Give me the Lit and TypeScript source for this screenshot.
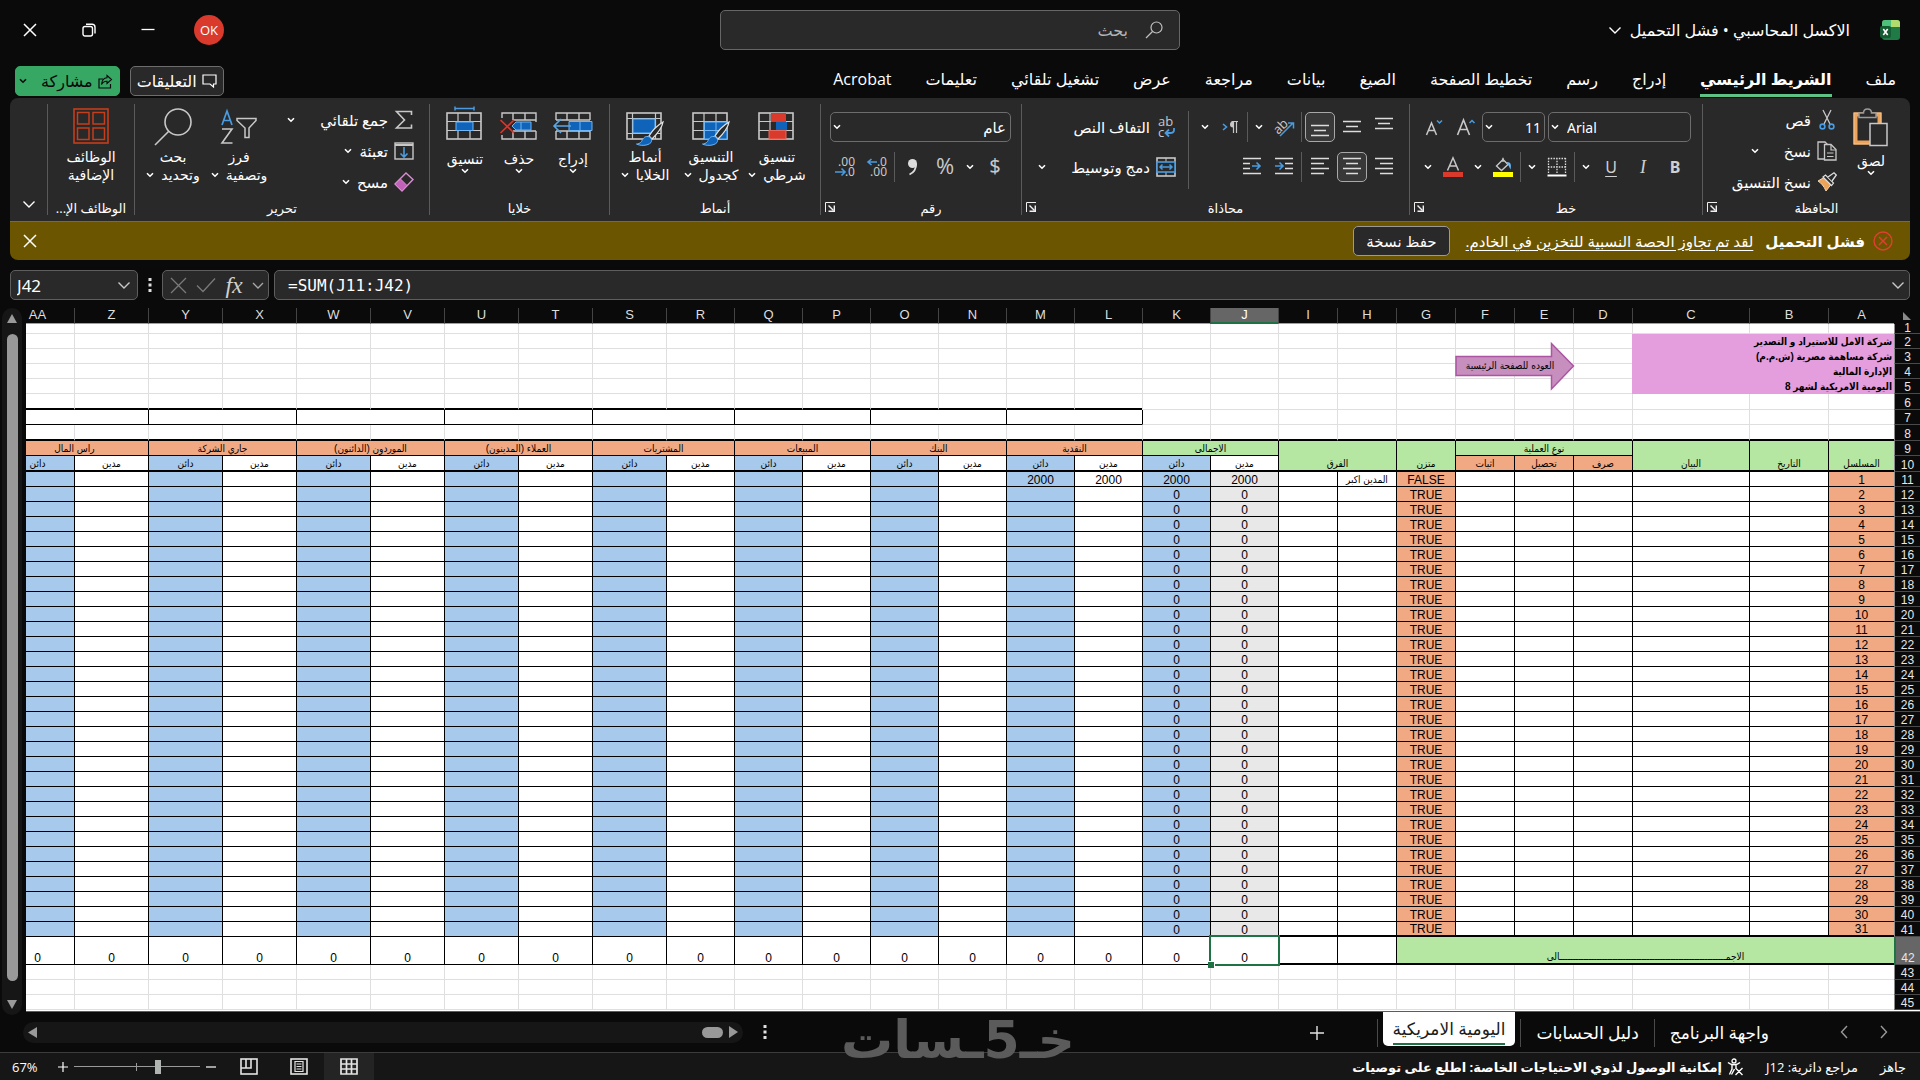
import { LitElement, html, svg, css, nothing, TemplateResult } from "lit";
import { customElement } from "lit/decorators.js";
import { classMap } from "lit/directives/class-map.js";
import { styleMap } from "lit/directives/style-map.js";

const icon = (w: number, h: number, body: unknown) => html`<svg
  width=${w} height=${h} viewBox="0 0 ${w} ${h}" fill="none" aria-hidden="true">${body}</svg>`;

const chevron = () => icon(8, 6, svg`<path d="M1 1.2 4 4.2 7 1.2" stroke="currentColor" stroke-width="1.6"/>`);
const wideChevron = (c = "currentColor") =>
  icon(14, 9, svg`<path d="M1.500 1.500 7 7 12.500 1.500" stroke=${c} stroke-width="1.4"/>`);
const cross = (c = "currentColor") =>
  icon(14, 14, svg`<path d="M1 1 13 13M13 1 1 13" stroke=${c} stroke-width="1.5"/>`);

const BLUE = "#4a9be0";
const FILL = "#0f63b8";
const EDGE = "#6fb6f2";
const GREY = "#c8c8c8";

const shared = css`
  * { box-sizing: border-box; }
  button, input, select {
    font: inherit;
    color: inherit;
    background: none;
    border: 0;
    padding: 0;
    margin: 0;
    border-radius: 0;
  }
  select { appearance: none; }
  svg { display: block; flex: none; direction: ltr; overflow: visible; }
`;

const launcher = () => html`<button class="launch" aria-label="المزيد من الخيارات">${icon(10, 10, svg`
  <path d="M.5 10V.5H10" stroke="#f0f0f0"/><path d="M3.500 3.500 8.500 8.500" stroke="#f0f0f0" stroke-width="1.400"/>
  <path d="M9.300 3.500V9.300H3.500" stroke="#f0f0f0" stroke-width="1.400"/>`)}</button>`;

const gridBase = svg`<rect x="1" y="1" width="34" height="26" stroke=${GREY} stroke-width="1.600"/>
  <path d="M12 1V27M24 1V27M1 9.500H35M1 18.500H35" stroke=${GREY} stroke-width="1.200"/>`;
const brush = svg`<path d="M37 10C32 13 26 19 23 24L26 27C31 22 36 16 37 10Z" fill="#292929" stroke="#e4e4e4" stroke-width="1.300"/>
  <path d="M22 24.500C18 24 17 27 15.500 29.500 14 31.500 12 32 10.500 32 14 34 22 34 25 30.500 26.500 28 25 25 22 24.500Z" fill=${FILL} stroke=${EDGE}/>`;

const lines = (rows: [number, number, number][], extra: unknown = nothing) =>
  icon(20, 20, svg`${rows.map(([x1, x2, y]) => svg`<path d="M${x1} ${y}.500H${x2}" stroke="#dcdcdc" stroke-width="1.500"/>`)}${extra}`);

const I = {
  paste: icon(36, 38, svg`<rect x="2.500" y="6.500" width="24" height="28" stroke="#eda35a" stroke-width="4"/>
    <rect x="1" y="5" width="27" height="31" stroke="#f6c58f" stroke-width="1"/>
    <rect x="5" y="9" width="19" height="23" fill="#292929"/>
    <path d="M6 9.500V5H10.500C10.500 -.5 18.500 -.5 18.500 5H23V9.500Z" fill="#292929" stroke="#9a9a9a" stroke-width="1.500"/>
    <rect x="17" y="15.500" width="17" height="22" fill="#292929" stroke=${GREY} stroke-width="1.500"/>`),
  cut: icon(20, 20, svg`<path d="M6 0 13 14M14 0 7 14" stroke=${GREY} stroke-width="1.300"/>
    <circle cx="5.500" cy="16.500" r="2.400" stroke=${BLUE} stroke-width="1.600"/><circle cx="14.500" cy="16.500" r="2.400" stroke=${BLUE} stroke-width="1.600"/>`),
  copy: icon(20, 20, svg`<path d="M7 18H1V1H8L11 4" stroke=${GREY} stroke-width="1.300"/>
    <path d="M7.500 3.500H14L19 8.500V19H7.500Z" fill="#292929" stroke=${GREY} stroke-width="1.300"/>
    <path d="M14 4V9H19M10 12H16.500M10 15.500H16.500" stroke=${GREY} stroke-width="1.200"/>`),
  painter: icon(20, 20, svg`<path d="M1 9 7 5.500 14 12.500 9 19C7 14 4 11 1 9Z" fill="#eda35a" stroke="#f6d5ae"/>
    <path d="M6 5 8.500 3 16.500 11 14.500 13.500Z" fill="#292929" stroke="#dedede" stroke-width="1.200"/>
    <path d="M11 5 17 .8 19.300 3 15 9" fill="#292929" stroke="#dedede" stroke-width="1.300"/>`),
  growA: icon(20, 20, svg`<path d="M1.500 18 7.500 3 13.500 18M3.800 12.500H11.300" stroke=${GREY} stroke-width="1.600"/>
    <path d="M13.500 6 16 3.500 18.500 6" stroke=${BLUE} stroke-width="1.500"/>`),
  shrinkA: icon(20, 20, svg`<path d="M2.500 18 7.500 6 12.500 18M4.300 13.500H10.800" stroke=${GREY} stroke-width="1.500"/>
    <path d="M13 3.500 15.500 6 18 3.500" stroke=${BLUE} stroke-width="1.500"/>`),
  borders: icon(20, 20, svg`<path d="M1 1.500H19M1 10H19M1.500 1V17M10 1V17M18.500 1V17" stroke="#dcdcdc" stroke-width="1.300" stroke-dasharray="1.500 1.200"/>
    <path d="M.5 18.500H19.500" stroke="#fff" stroke-width="2"/>`),
  bucket: icon(20, 20, svg`<path d="M3.500 9 10 2.500 15 7.500 8.500 13.500Z" stroke=${GREY} stroke-width="1.400"/>
    <path d="M10 5V.8" stroke=${GREY} stroke-width="1.400"/><path d="M14 5C18 5 18.500 8 17.500 12.500 16 10 16 8 14 7Z" fill=${EDGE}/>
    <rect y="15" width="20" height="5" fill="#ffff00"/>`),
  fontColor: icon(20, 20, svg`<path d="M4.500 13.500 10 .8 15.500 13.500M6.500 9H13.500" stroke=${GREY} stroke-width="1.500"/>
    <rect y="15" width="20" height="5" fill="#d93a2c"/>`),
  top: lines([[1, 19, 1], [4, 16, 6], [1, 19, 11]]),
  middle: lines([[1, 19, 4], [4, 16, 9], [1, 19, 14]]),
  bottom: lines([[1, 19, 8], [4, 16, 13], [1, 19, 18]]),
  right: lines([[1, 19, 1], [6, 19, 6], [1, 19, 11], [6, 19, 16]]),
  center: lines([[1, 19, 1], [4, 16, 6], [1, 19, 11], [4, 16, 16]]),
  left: lines([[1, 19, 1], [1, 14, 6], [1, 19, 11], [1, 14, 16]]),
  outdent: lines([[1, 19, 1], [11, 19, 6], [11, 19, 11], [1, 19, 16]],
    svg`<path d="M1 9H9M5.500 5.500 9 9 5.500 12.500" stroke=${BLUE} stroke-width="1.600"/>`),
  indent: lines([[1, 19, 1], [1, 8, 6], [1, 8, 11], [1, 19, 16]],
    svg`<path d="M10 9H18M14.500 5.500 18 9 14.500 12.500" stroke=${BLUE} stroke-width="1.600"/>`),
  orient: icon(22, 22, svg`<text x="1" y="15" font-family="Open Sans" font-size="13" fill=${GREY} transform="rotate(-45 8 12)">ab</text>
    <path d="M7 20 20 7M15 7H20.500V12.500" stroke=${BLUE} stroke-width="1.500"/>`),
  rtl: icon(18, 14, svg`<path d="M2 4 5.500 7 2 10" stroke=${BLUE} stroke-width="1.600"/>
    <path d="M12.500 1.500V13M15.500 1.500V13M10.500 1.500H17" stroke=${GREY} stroke-width="1.200"/><path d="M12 1.500A3 3 0 0 0 12 7.500Z" fill=${GREY}/>`),
  wrap: icon(20, 22, svg`<text x="2" y="10" font-family="Open Sans" font-size="13" fill=${GREY}>ab</text>
    <text x="2" y="21" font-family="Open Sans" font-size="13" fill=${GREY}>c</text>
    <path d="M18 12V14Q18 17 14 17H10M13 13.500 9.500 17 13 20.500" stroke=${BLUE} stroke-width="1.800"/>`),
  merge: icon(20, 20, svg`<rect x="1" y="1" width="18" height="18" stroke=${GREY} stroke-width="1.600"/>
    <path d="M10 1V19" stroke=${GREY}/><rect x="1" y="5" width="18" height="10" fill="#292929" stroke=${BLUE} stroke-width="1.600"/>
    <path d="M4 10H16M6.500 7.500 4 10 6.500 12.500M13.500 7.500 16 10 13.500 12.500" stroke=${BLUE} stroke-width="1.500"/>`),
  inc: icon(20, 20, svg`<text x="20" y="9" font-family="Noto Sans" font-size="12" fill=${GREY} text-anchor="end">.0</text>
    <text x="20" y="19" font-family="Noto Sans" font-size="12" fill=${GREY} text-anchor="end">.00</text>
    <path d="M1 5H10M4.500 2 1 5 4.500 8" stroke=${BLUE} stroke-width="1.600"/>`),
  dec: icon(20, 20, svg`<text x="20" y="9" font-family="Noto Sans" font-size="12" fill=${GREY} text-anchor="end">.00</text>
    <text x="20" y="19" font-family="Noto Sans" font-size="12" fill=${GREY} text-anchor="end">.0</text>
    <path d="M0 15H10M6.500 11.500 10 15 6.500 18.500" stroke=${BLUE} stroke-width="1.600"/>`),
  comma: icon(12, 18, svg`<circle cx="5.500" cy="5.500" r="4.500" fill="#dcdcdc"/><path d="M9.200 5.500C9.200 11 7 14.500 2.500 16.500" stroke="#dcdcdc" stroke-width="1.800"/>`),
  cond: icon(38, 36, svg`<g transform="translate(0 4)">${gridBase}<rect x="13" y="1" width="15" height="9" fill="#d93a2c"/>
    <rect x="18" y="10" width="11" height="8" fill=${FILL}/><rect x="11" y="18.500" width="17" height="8.500" fill="#d93a2c" stroke="#e8675b"/></g>`),
  table: icon(38, 36, svg`<g transform="translate(0 4)">${gridBase}<path d="M12.500 10H35V27H12.500Z" fill=${FILL} stroke=${EDGE}/>
    <path d="M24 10V27M12 18.500H35" stroke=${EDGE}/>${brush}</g>`),
  styles: icon(38, 36, svg`<g transform="translate(0 4)"><rect x="1" y="1" width="34" height="26" stroke=${GREY} stroke-width="1.600"/>
    <path d="M6.500 1V27M29.500 1V27M1 6.500H35M1 21.500H35" stroke=${GREY} stroke-width="1.200"/>
    <rect x="7" y="7" width="22" height="14" fill=${FILL} stroke=${EDGE}/>${brush}</g>`),
  insert: icon(40, 36, svg`<g transform="translate(0 4)"><path d="M3 8V1H37V8M14 1V8M26 1V8M3 19V27H37V19M14 19V27M26 19V27M3 8H37M3 19H37" stroke=${GREY} stroke-width="1.400"/>
    <path d="M16 9.500H39V18.500H16ZM27 9.500V18.500" fill=${FILL} stroke=${EDGE}/>
    <path d="M1 14H18M8 7 1 14 8 21" stroke="#5aa7e6" stroke-width="1.600"/></g>`),
  remove: icon(40, 36, svg`<g transform="translate(0 4)"><path d="M3 6V1H37V10M14 1V8M26 1V8M3 23V27H37V19M14 20V27M26 19V27M14 8H37M14 19H37" stroke=${GREY} stroke-width="1.400"/>
    <path d="M13 14 17 10H32V18H17Z" fill=${FILL} stroke=${EDGE}/><path d="M22 10V18" stroke=${EDGE}/>
    <path d="M1.500 8 15 21M15 8 1.500 21" stroke="#e0352b" stroke-width="1.600"/></g>`),
  format: icon(38, 36, svg`<path d="M9 .5H28M9 -1.500V2.500M28 -1.500V2.500" stroke=${BLUE} stroke-width="1.500"/>
    <g transform="translate(0 4)">${gridBase}<rect x="10" y="10" width="17" height="8.500" fill=${FILL} stroke=${EDGE}/></g>`),
  sum: icon(20, 20, svg`<path d="M17.500 5V1.500H2.500L10.500 10 2.500 18H17.500V14.500" stroke=${GREY} stroke-width="1.600"/>`),
  fill: icon(20, 20, svg`<rect x="1" y="2" width="18" height="16" stroke=${GREY} stroke-width="1.400"/><path d="M1 4H19" stroke=${GREY} stroke-width="2"/>
    <path d="M10 6V15.500M6.500 12.500 10 16 13.500 12.500" stroke=${BLUE} stroke-width="1.600"/>`),
  erase: icon(20, 20, svg`<path d="M12 1 19 7.500 8 19 1 12Z" stroke="#d88fd2" stroke-width="1.400"/><path d="M6.500 7 13 13.500 8 19 1 12Z" fill="#c063b8" stroke="#d88fd2"/>`),
  sort: icon(38, 36, svg`<path d="M2 17 7 3 12 17M4 12.500H10" stroke=${BLUE} stroke-width="1.700"/>
    <path d="M2 21H12L2 35H12.500" stroke=${GREY} stroke-width="1.600"/>
    <path d="M17 10.500H36V12.500L29 20V29.500H25V20L17 12.500Z" stroke=${GREY} stroke-width="1.500"/>`),
  find: icon(38, 36, svg`<circle cx="24" cy="14" r="13" stroke=${GREY} stroke-width="1.600"/><path d="M15 23 1 37" stroke=${GREY} stroke-width="1.600"/>`),
  addins: icon(36, 36, svg`<rect x="1" y="1" width="34" height="34" stroke="#c43e1c" stroke-width="1.600"/>
    <path d="M4.500 4.500H16V16H4.500ZM20 4.500H31.500V16H20ZM4.500 20H16V31.500H4.500ZM20 20H31.500V31.500H20Z" stroke="#c43e1c" stroke-width="1.500"/>`),
};

@customElement("ribbon-bar")
export class RibbonBar extends LitElement {
  static styles = [shared, css`
    :host { display: block; color: #fff; font-size: 15px; }
    .ribbon { display: flex; height: 124px; background: #292929; border-radius: 8px 8px 0 0; padding: 6px 0; border-bottom: 1px solid #6a6a6a; }
    .group { display: flex; flex-direction: column; border-left: 1px solid #5a5a5a; flex: none; }
    .body { flex: 1; display: flex; justify-content: flex-start; }
    .foot { display: flex; height: 14px; align-items: center; font-size: 13px; line-height: 14px; }
    .foot span { flex: 1; text-align: center; white-space: nowrap; }
    .launch { width: 20px; height: 12px; display: flex; justify-content: flex-end; padding-left: 4px; }
    .clip { width: 208px; } .font { width: 293px; } .align { width: 388px; } .num { width: 201px; }
    .style { width: 211px; } .cell { width: 180px; } .edit { width: 295px; } .add { width: 87px; }
    .clip .body { padding-right: 16px; } .clip .small { padding-right: 11px; }
    .style .body { padding-right: 10px; }
    .cell .body { padding-right: 9px; }
    .edit .body { padding-right: 15px; } .edit .small { width: 142px; }
    .add .body { justify-content: center; }
    .rest { flex: 1; display: flex; align-items: flex-end; justify-content: center; padding-bottom: 6px; }
    .big { display: flex; flex-direction: column; align-items: center; gap: 4px; line-height: 18px; font-size: 14px; white-space: nowrap; padding-top: 4px; }
    .big .txt { display: flex; flex-direction: column; align-items: center; }
    .big .row { display: flex; align-items: center; gap: 7px; }
    .small { display: flex; flex-direction: column; }
    .item { display: flex; align-items: center; gap: 6px; height: 31px; white-space: nowrap; }
    .item .drop { width: 10px; }
    .item.far .drop { margin-right: 18px; }
    .rows { display: flex; flex-direction: column; gap: 10px; padding-top: 8px; }
    .wide { padding-right: 12px; }
    .line { display: flex; align-items: center; height: 30px; }
    .tool { width: 32px; height: 30px; display: flex; align-items: center; justify-content: center; font-size: 18px; color: #d0d0d0; }
    .tool.on { width: 30px; margin: 0 1px; border: 1px solid #a8a8a8; border-radius: 5px; background: #383838; }
    .drop { width: 18px; height: 30px; display: flex; align-items: center; justify-content: center; }
    .sep { width: 1px; height: 30px; background: #5a5a5a; margin: 0 2px 0 1px; }
    .tall { width: 1px; height: 78px; background: #5a5a5a; margin: 7px 7px 0 0; }
    .combo { display: flex; align-items: center; height: 30px; border: 1px solid #6d6d6d; border-radius: 5px; position: relative; }
    .combo select { width: 100%; height: 28px; font-size: 15px; }
    .combo svg { position: absolute; left: 2px; pointer-events: none; }
    .b { font: 700 16px "Noto Sans", sans-serif; }
    .i { font: italic 18px "Liberation Serif", serif; }
    .u { font: 16px "Noto Sans", sans-serif; text-decoration: underline; text-underline-offset: 3px; }
    .name { width: 143px; margin-left: 3px; } .name select { padding-left: 18px; font: 14px "Noto Sans", sans-serif; }
    .size { width: 63px; } .size select { padding-right: 3px; font: 14px "Noto Sans", sans-serif; }
    .kind { width: 181px; } .kind select { padding-right: 4px; }
    .pad { padding-right: 9px; }
    .font .pad { padding-right: 11px; } .num .pad { padding-right: 10px; }
    .w66 { width: 66px; } .w54 { width: 54px; } .w46 { width: 46px; }
    .one .txt { padding-top: 2px; }
  `];

  private big(ic: TemplateResult, cls: string, l1: string, l2: string | null, drop = true) {
    return html`<button class="big ${cls}">${ic}
      <span class="txt"><span>${l1}</span>
        ${l2 ? html`<span class="row">${l2}${drop ? chevron() : nothing}</span>` : chevron()}
      </span></button>`;
  }
  private item(ic: TemplateResult, label: string, drop = false, far = false) {
    return html`<button class=${classMap({ item: true, far })}>${ic}<span>${label}</span>${drop ? html`<span class="drop">${chevron()}</span>` : nothing}</button>`;
  }
  private tool(c: unknown, label: string, on = false, cls = "") {
    return html`<button class="tool ${cls} ${on ? "on" : ""}" aria-label=${label}>${c}</button>`;
  }
  private drop(label: string) {
    return html`<button class="drop" aria-label=${label}>${chevron()}</button>`;
  }
  private foot(label: string, launch = false) {
    return html`<div class="foot"><span>${label}</span>${launch ? launcher() : nothing}</div>`;
  }

  render() {
    const sep = html`<span class="sep"></span>`;
    return html`<div class="ribbon" dir="rtl">
      <section class="group clip">
        <div class="body">
          ${this.big(I.paste, "w46 one", "لصق", null)}
          <div class="small">
            ${this.item(I.cut, "قص")}${this.item(I.copy, "نسخ", true, true)}${this.item(I.painter, "نسخ التنسيق")}
          </div>
        </div>${this.foot("الحافظة", true)}
      </section>
      <section class="group font">
        <div class="body pad"><div class="rows">
          <div class="line">
            <label class="combo name" dir="ltr"><select aria-label="الخط"><option>Arial</option></select>${chevron()}</label>
            <label class="combo size"><select aria-label="حجم الخط"><option>11</option></select>${chevron()}</label>
            ${this.tool(I.growA, "تكبير الخط")}${this.tool(I.shrinkA, "تصغير الخط")}
          </div>
          <div class="line">
            ${this.tool("B", "غامق", false, "b")}${this.tool("I", "مائل", false, "i")}${this.tool("U", "تسطير", false, "u")}${this.drop("أنماط التسطير")}${sep}
            ${this.tool(I.borders, "حدود")}${this.drop("أنواع الحدود")}${sep}
            ${this.tool(I.bucket, "لون التعبئة")}${this.drop("ألوان التعبئة")}${this.tool(I.fontColor, "لون الخط")}${this.drop("ألوان الخط")}
          </div>
        </div></div>${this.foot("خط", true)}
      </section>
      <section class="group align">
        <div class="body pad">
          <div class="rows">
            <div class="line">${this.tool(I.top, "محاذاة للأعلى")}${this.tool(I.middle, "محاذاة للوسط")}${this.tool(I.bottom, "محاذاة للأسفل", true)}${sep}
              ${this.tool(I.orient, "الاتجاه")}${this.drop("خيارات الاتجاه")}${sep}${this.tool(I.rtl, "من اليمين لليسار")}${this.drop("اتجاه النص")}</div>
            <div class="line">${this.tool(I.right, "محاذاة لليمين")}${this.tool(I.center, "توسيط", true)}${this.tool(I.left, "محاذاة لليسار")}${sep}
              ${this.tool(I.outdent, "إنقاص المسافة البادئة")}${this.tool(I.indent, "زيادة المسافة البادئة")}</div>
          </div>
          <span class="tall"></span>
          <div class="rows wide">
            <button class="item line">${I.wrap}<span>التفاف النص</span></button>
            <button class="item line far">${I.merge}<span>دمج وتوسيط</span><span class="drop">${chevron()}</span></button>
          </div>
        </div>${this.foot("محاذاة", true)}
      </section>
      <section class="group num">
        <div class="body pad"><div class="rows">
          <div class="line"><label class="combo kind"><select aria-label="تنسيق الأرقام"><option>عام</option></select>${chevron()}</label></div>
          <div class="line">${this.tool(icon(20, 24, svg`<text x="10" y="18" text-anchor="middle" font-family="Noto Sans" font-size="20" fill=${GREY}>$</text>`), "عملة")}${this.drop("رموز العملات")}
            ${this.tool(icon(20, 20, svg`<text x="10" y="17" text-anchor="middle" font-family="Open Sans" font-size="22" fill=${GREY}>%</text>`), "نسبة مئوية")}
            ${this.tool(I.comma, "فاصلة")}${sep}${this.tool(I.inc, "زيادة المنازل")}${this.tool(I.dec, "إنقاص المنازل")}</div>
        </div></div>${this.foot("رقم", true)}
      </section>
      <section class="group style">
        <div class="body">
          ${this.big(I.cond, "w66", "تنسيق", "شرطي")}${this.big(I.table, "w66", "التنسيق", "كجدول")}${this.big(I.styles, "w66", "أنماط", "الخلايا")}
        </div>${this.foot("أنماط")}
      </section>
      <section class="group cell">
        <div class="body">
          ${this.big(I.insert, "w54 one", "إدراج", null)}${this.big(I.remove, "w54 one", "حذف", null)}${this.big(I.format, "w54 one", "تنسيق", null)}
        </div>${this.foot("خلايا")}
      </section>
      <section class="group edit">
        <div class="body">
          <div class="small">
            ${this.item(I.sum, "جمع تلقائي", true, true)}${this.item(I.fill, "تعبئة", true)}${this.item(I.erase, "مسح", true)}
          </div>
          ${this.big(I.sort, "w66", "فرز", "وتصفية")}${this.big(I.find, "w66", "بحث", "وتحديد")}
        </div>${this.foot("تحرير")}
      </section>
      <section class="group add">
        <div class="body">${this.big(I.addins, "", "الوظائف", "الإضافية", false)}</div>${this.foot("الوظائف الإ...")}
      </section>
      <button class="rest" aria-label="طي الشريط">${wideChevron()}</button>
    </div>`;
  }
}

const COLS: [string, number][] = [
  ["A", 66], ["B", 79], ["C", 117], ["D", 59], ["E", 59], ["F", 59], ["G", 59], ["H", 59], ["I", 59],
  ["J", 68], ["K", 68], ["L", 68], ["M", 68], ["N", 68], ["O", 68], ["P", 68], ["Q", 68], ["R", 68],
  ["S", 74], ["T", 74], ["U", 74], ["V", 74], ["W", 74], ["X", 74], ["Y", 74], ["Z", 74], ["AA", 74],
];
const ACCOUNTS = ["النقدية", "البنك", "المبيعات", "المشتريات", "العملاء (المدينون)", "الموردون (الدائنون)", "جاري الشركة", "راس المال"];
const TITLES: Record<number, string> = {
  2: "شركة الامل للاستيراد و التصدير",
  3: "شركة مساهمة مصرية (ش.م.م)",
  4: "الإدارة المالية",
  5: "اليومية الامريكية لشهر 8",
};
const TOTAL = `الاجم${"ـ".repeat(63)}الى`;

@customElement("sheet-grid")
export class SheetGrid extends LitElement {
  static styles = [shared, css`
    :host { display: block; overflow: hidden; position: relative; background: #fff; border-bottom: 1px solid #5c5c5c; }
    table { table-layout: fixed; width: 1920px; border-collapse: separate; border-spacing: 0; color: #000;
      font: 12px/12px "Liberation Sans", "DejaVu Sans Condensed", "DejaVu Sans", sans-serif; }
    th, td { padding: 0; white-space: nowrap; text-align: center; vertical-align: bottom; font-weight: 400; }
    td { border-left: 1px solid #dfdfdf; border-bottom: 1px solid #dfdfdf; }
    .letters th { height: 16px; background: #0a0a0a; color: #dedede; border-left: 1px solid #444; border-bottom: 1px solid #a0a0a0; font-size: 13px; line-height: 14px; vertical-align: top; }
    .letters th.cur { background: #666; color: #fff; border-bottom: 2px solid #1f7244; }
    .letters .corner { border-left: 0; border-bottom-color: #0a0a0a; }
    .corner svg { margin: 4px auto 0 9px; }
    .rownum { background: #0a0a0a; color: #e6e6e6; border-left: 1px solid #8c8c8c; border-bottom: 1px solid #4a4a4a; }
    .rownum.cur { background: #666; border-left: 2px solid #1f7244; }
    .h10 { height: 10px; } .h15 { height: 15px; } .h16 { height: 16px; } .h28 { height: 28px; }
    .h10 .rownum { line-height: 9px; }
    .ink { border-left-color: #000; border-bottom-color: #000; }
    .heavy { border-bottom: 2px solid #000; }
    .edge { border-left-color: #000; }
    .green { background: #b5e6a2; } .orange { background: #f1a983; } .blue { background: #a6c9ec; } .grey { background: #e8e8e8; }
    .ar { font-size: 10px; line-height: 13px; }
    .pink { background: #e49edd; border-color: #e49edd; text-align: right; font-weight: 700; font-size: 10px; padding-right: 2px; }
    .active { position: relative; }
    .active::before { content: ""; position: absolute; inset: -2px; border: 2px solid #1f7244; }
    .active::after { content: ""; position: absolute; left: -3px; bottom: -4px; width: 6px; height: 6px; background: #1f7244; border: 1px solid #fff; border-width: 1px 1px 0 0; }
    .shape { position: absolute; right: 345px; top: 34px; width: 120px; height: 48px; color: #000; text-decoration: none; }
    .shape svg { position: absolute; inset: 0; }
    .shape span { position: absolute; inset: 15px 18px 15px 8px; text-align: center; white-space: nowrap; font: 10px/18px "DejaVu Sans Condensed", sans-serif; }
  `];

  private num(n: number) {
    return html`<th scope="row" class=${classMap({ rownum: true, cur: n === 42 })}>${n}</th>`;
  }

  private blank(n: number, h: string) {
    const title = TITLES[n];
    const from = title ? 3 : 0;
    return html`<tr class=${h}>${this.num(n)}
      ${title ? html`<td class="pink" colspan="3">${title}</td>` : nothing}
      ${COLS.slice(from).map((_, k) => html`<td class=${classMap({ heavy: n === 8 || (n === 6 && k + from > 10) })}></td>`)}</tr>`;
  }

  private entry(n: number) {
    const first = n === 11;
    return html`<tr class="h15">${this.num(n)}${COLS.map(([name], i) => {
      let v = "";
      if (i === 0) v = String(n - 10);
      else if (name === "G") v = first ? "FALSE" : "TRUE";
      else if (name === "H" && first) v = "المدين اكبر";
      else if (i === 9 || i === 10) v = first ? "2000" : "0";
      else if ((i === 11 || i === 12) && first) v = "2000";
      return html`<td class=${classMap({
        ink: true, orange: i === 0 || i === 6, grey: i === 9, blue: i >= 10 && i % 2 === 0,
        heavy: n === 41 && i < 9, ar: name === "H",
      })}>${v}</td>`;
    })}</tr>`;
  }

  render() {
    const body: TemplateResult[] = [];
    body.push(this.blank(1, "h10"));
    for (let n = 2; n <= 5; n++) body.push(this.blank(n, "h15"));
    body.push(this.blank(6, "h16"));
    body.push(html`<tr class="h15">${this.num(7)}${COLS.slice(0, 11).map((_, i) => html`<td class=${classMap({ edge: i === 10 })}></td>`)}
      ${ACCOUNTS.map(() => html`<td class="ink" colspan="2"></td>`)}</tr>`);
    body.push(this.blank(8, "h16"));
    body.push(html`<tr class="h15">${this.num(9)}
      <td class="ink green heavy ar" rowspan="2">المسلسل</td><td class="ink green heavy ar" rowspan="2">التاريخ</td><td class="ink green heavy ar" rowspan="2">البيان</td>
      <td class="ink green ar" colspan="3">نوع العملية</td><td class="ink green heavy ar" rowspan="2">متزن</td>
      <td class="ink green heavy ar" rowspan="2" colspan="2">الفرق</td><td class="ink green ar" colspan="2">الاجمالى</td>
      ${ACCOUNTS.map((a) => html`<td class="ink orange ar" colspan="2">${a}</td>`)}</tr>`);
    body.push(html`<tr class="h16">${this.num(10)}
      ${["صرف", "تحصيل", "اثبات"].map((t) => html`<td class="ink orange heavy ar">${t}</td>`)}
      ${COLS.slice(9).map((_, i) => html`<td class="ink heavy ar ${i % 2 ? "blue" : ""}">${i % 2 ? "دائن" : "مدين"}</td>`)}</tr>`);
    for (let n = 11; n <= 41; n++) body.push(this.entry(n));
    body.push(html`<tr class="h28">${this.num(42)}<td class="ink green heavy ar" colspan="7">${TOTAL}</td>
      <td class="ink heavy"></td><td class="ink heavy"></td><td class="ink active">0</td>
      ${COLS.slice(10).map(() => html`<td class="ink">0</td>`)}</tr>`);
    for (let n = 43; n <= 45; n++) body.push(this.blank(n, "h15"));

    return html`<table dir="rtl">
        <colgroup><col style=${styleMap({ width: "26px" })}>${COLS.map(([, w]) => html`<col style=${styleMap({ width: `${w}px` })}>`)}</colgroup>
        <thead><tr class="letters"><th class="corner">${icon(8, 8, svg`<path d="M0 0V8H8Z" fill="#8a8a8a"/>`)}</th>
          ${COLS.map(([n]) => html`<th scope="col" class=${classMap({ cur: n === "J" })}>${n}</th>`)}</tr></thead>
        <tbody>${body}</tbody>
      </table>
      <a class="shape" href="#home">${icon(120, 48, svg`<path d="M1 14.500H96.500V1.500L118.500 24 96.500 47V33.500H1Z" fill="#c78fbe" stroke="#ab55a3" stroke-width="1.500"/>`)}<span>العوده للصفحة الرئيسية</span></a>`;
  }
}

@customElement("app-root")
export class AppRoot extends LitElement {
  static styles = [shared, css`
    :host { display: block; }
    .app { height: 100vh; display: flex; flex-direction: column; background: #0a0a0a; color: #fff; overflow: hidden; position: relative;
      font: 15px/20px "Open Sans", "DejaVu Sans", sans-serif; }
    .titlebar { height: 60px; display: grid; grid-template-columns: 1fr 460px 1fr; column-gap: 20px; align-items: center; padding: 0 20px 0 0; font-size: 16px; }
    .doc { display: flex; align-items: center; gap: 8px; white-space: nowrap; }
    .doc .xl { margin-left: 22px; }
    .search { display: flex; align-items: center; gap: 17px; height: 40px; border: 1px solid #666; border-radius: 5px; background: #292929; padding: 0 16px; }
    .search input { flex: 1; min-width: 0; outline: 0; }
    .search input::placeholder { color: #b4b4b4; opacity: 1; }
    .win { display: flex; justify-content: flex-end; align-items: center; gap: 39px; padding-left: 23px; }
    .win div { display: flex; gap: 45px; }
    .avatar { width: 30px; height: 30px; border-radius: 50%; background: #d93a2c; font-size: 13px; }
    .menu { display: flex; align-items: center; height: 38px; padding: 4px 24px 0 15px; }
    .tabs { display: flex; gap: 34px; flex: 1; font-size: 16px; }
    .tab { height: 32px; padding: 4px 0; white-space: nowrap; color: #fff; text-decoration: none; border-bottom: 3px solid transparent; }
    .tab.on { font-weight: 700; border-color: #5fc285; }
    .acts { display: flex; gap: 10px; font-size: 16px; }
    .act { display: flex; align-items: center; gap: 5px; height: 30px; border-radius: 5px; padding: 0 6px; border: 1px solid #6d6d6d; background: #292929; white-space: nowrap; }
    .share { background: #37a764; border-color: #37a764; color: #0a0a0a; padding: 0 6px 0 3px; }
    .share .drop { padding-right: 9px; }
    ribbon-bar { margin: 0 10px; }
    .alert { display: flex; align-items: center; height: 38px; margin: 0 10px; padding: 0 17px 0 13px; background: #6b5500; border-radius: 0 0 8px 8px; gap: 8px; white-space: nowrap; }
    .alert a { color: #fff; text-underline-offset: 3px; margin-right: 4px; }
    .alert .save { height: 30px; padding: 0 12px; border: 1px solid #9a9a9a; border-radius: 5px; background: #292929; margin-right: 8px; }
    .alert .close { margin-right: auto; }
    .fbar { display: flex; height: 30px; margin: 10px 10px 8px; }
    .box { border: 1px solid #5e5e5e; border-radius: 5px; background: #292929; display: flex; align-items: center; }
    .namebox { width: 128px; padding: 0 6px; }
    .namebox input { flex: 1; min-width: 0; font: 17px "Noto Sans", sans-serif; }
    .dots { width: 24px; display: flex; justify-content: center; align-items: center; }
    .fx { width: 107px; padding: 0 4px 0 7px; justify-content: space-between; margin-right: 5px; }
    .fx i { font: italic 24px/24px "Liberation Serif", serif; color: #d0d0d0; }
    .formula { flex: 1; padding: 0 4px 0 13px; }
    .formula input { flex: 1; font: 16px "DejaVu Sans Mono", monospace; }
    .main { flex: 1; min-height: 0; display: flex; }
    .vbar { width: 20px; margin: 0 4px -3px 2px; background: #161616; border-radius: 10px; display: flex; flex-direction: column; align-items: center; padding: 6px 0; gap: 11px; }
    .vbar .thumb { flex: 1; width: 11px; border-radius: 6px; background: #999; margin-bottom: 8px; }
    sheet-grid { flex: 1; min-width: 0; }
    .sheets { display: flex; align-items: flex-start; height: 40px; padding: 0 32px 0 23px; font-size: 17px; }
    .nav { height: 40px; display: flex; align-items: center; gap: 32px; margin-left: 56px; color: #999; }
    .sheet { height: 28px; margin-top: 7px; padding: 0 15px; display: flex; align-items: center; white-space: nowrap; border-left: 1px solid #4a4a4a; }
    .sheet.on { margin: 0 5px; height: 34px; padding: 3px 10px 0; background: #fff; color: #1c1c1c; border: 0; border-radius: 0 0 5px 5px; }
    .sheet.on span { border-bottom: 2px solid #1f7244; height: 29px; line-height: 26px; }
    .plus { height: 28px; margin-top: 7px; border-right: 1px solid #4a4a4a; padding-right: 52px; display: flex; align-items: center; }
    .hwrap { margin-right: auto; display: flex; align-items: center; height: 40px; }
    .hbar { width: 720px; height: 21px; background: #161616; border-radius: 11px; display: flex; align-items: center; justify-content: space-between; padding: 0 5px; margin-right: 10px; }
    .hbar div { display: flex; align-items: center; gap: 6px; }
    .hbar i { width: 21px; height: 11px; border-radius: 6px; background: #999; }
    .status { display: flex; align-items: center; height: 28px; background: #161616; border-top: 1px solid #3c3c3c; padding: 0 14px 0 12px; font-size: 13px; white-space: nowrap; }
    .status > span { margin-left: 22px; }
    .status .acc { display: flex; align-items: center; gap: 4px; font-weight: 700; }
    .views { margin-right: auto; display: flex; }
    .view { width: 50px; height: 27px; display: flex; align-items: center; justify-content: center; }
    .view.on { background: #242424; }
    .zoom { display: flex; align-items: center; gap: 6px; margin-right: 8px; }
    .zoom input { appearance: none; width: 126px; height: 16px;
      background: linear-gradient(#9a9a9a, #9a9a9a) center / 1px 8px no-repeat, linear-gradient(#9a9a9a, #9a9a9a) center / 100% 1px no-repeat; }
    .zoom input::-webkit-slider-thumb { appearance: none; width: 6px; height: 14px; background: #b0b5b2; }
    .zoom output { margin-right: 14px; }
    .mark { position: absolute; right: 845px; bottom: 8px; display: flex; font: 700 52px/64px "DejaVu Sans", sans-serif; color: #5b5b5b; pointer-events: none; }
  `];

  render() {
    const tabs = ["ملف", "الشريط الرئيسي", "إدراج", "رسم", "تخطيط الصفحة", "الصيغ", "بيانات", "مراجعة", "عرض", "تشغيل تلقائي", "تعليمات", "Acrobat"];
    const excel = icon(20, 20, svg`<rect x="2" width="18" height="20" rx="3" fill="#1f7a45"/><path d="M2 7V3A3 3 0 0 1 5 0H11V7Z" fill="#4fc07c"/>
      <path d="M11 0H17A3 3 0 0 1 20 3V7H11Z" fill="#b3dc6e"/><rect y="6" width="11" height="12" rx="2" fill="#155c32"/>
      <path d="M3.300 9 7.700 15M7.700 9 3.300 15" stroke="#fff" stroke-width="1.600"/>`);
    const dots = icon(4, 14, svg`<path d="M.5 0H3.500V3H.5ZM.5 5.500H3.500V8.500H.5ZM.5 11H3.500V14H.5Z" fill="#e0e0e0"/>`);
    return html`<div class="app" dir="rtl">
      <header class="titlebar">
        <div class="doc"><span class="xl">${excel}</span><span>الاكسل المحاسبي • فشل التحميل</span>${wideChevron()}</div>
        <label class="search">${icon(18, 18, svg`<circle cx="11.500" cy="6.500" r="5.500" stroke="#c0c0c0" stroke-width="1.200"/><path d="M7.500 10.500 1 17" stroke="#c0c0c0" stroke-width="1.200"/>`)}
          <input type="search" placeholder="بحث" aria-label="بحث"></label>
        <div class="win">
          <button class="avatar">OK</button>
          <div><button aria-label="تصغير">${icon(14, 14, svg`<path d="M.5 6.500H13.500" stroke="#fff" stroke-width="1.300"/>`)}</button>
          <button aria-label="استعادة">${icon(14, 14, svg`<rect x="1" y="3.500" width="9.500" height="9.500" rx="2" stroke="#fff" stroke-width="1.400"/><path d="M4 1.200H10A3 3 0 0 1 13 4.200V10.500" stroke="#fff" stroke-width="1.400"/>`)}</button>
          <button aria-label="إغلاق">${cross()}</button></div>
        </div>
      </header>
      <div class="menu">
        <nav class="tabs">${tabs.map((t, i) => html`<a class=${classMap({ tab: true, on: i === 1 })} href="#">${t}</a>`)}</nav>
        <div class="acts">
          <button class="act">${icon(15, 14, svg`<path d="M1 1H14V10H11.500V13L8 10H1Z" stroke="#fff" stroke-width="1.200"/>`)}التعليقات</button>
          <button class="act share">${icon(15, 15, svg`<path d="M5 5H1V14H12.500V10" stroke="#0a0a0a" stroke-width="1.200"/><path d="M9 1.500 13.500 5.500 9 9.500V7.200C6 7 4.500 8.500 3.500 10.500 3.800 7 5.500 4 9 3.800Z" stroke="#0a0a0a" stroke-width="1.100"/>`)}مشاركة<span class="drop">${chevron()}</span></button>
        </div>
      </div>
      <ribbon-bar></ribbon-bar>
      <div class="alert" role="alert">
        ${icon(20, 20, svg`<circle cx="10" cy="10" r="9" stroke="#e0402f" stroke-width="1.400"/><path d="M6 6 14 14M14 6 6 14" stroke="#e0402f" stroke-width="1.400"/>`)}
        <strong>فشل التحميل</strong><a href="#quota">لقد تم تجاوز الحصة النسبية للتخزين في الخادم.</a>
        <button class="save">حفظ نسخة</button><button class="close" aria-label="إغلاق">${cross()}</button>
      </div>
      <div class="fbar" dir="ltr">
        <div class="box namebox"><input aria-label="مربع الاسم" value="J42">${wideChevron("#c8c8c8")}</div>
        <span class="dots">${dots}</span>
        <div class="box fx">${icon(17, 17, svg`<path d="M1 1 16 16M16 1 1 16" stroke="#7a7a7a" stroke-width="1.300"/>`)}${icon(20, 16, svg`<path d="M1 8.500 7 14.500 19 1.500" stroke="#7a7a7a" stroke-width="1.300"/>`)}<i>fx</i>${icon(12, 9, svg`<path d="M1 2 6 7 11 2" stroke="#a8a8a8" stroke-width="1.300"/>`)}</div>
        <div class="box formula"><input aria-label="شريط الصيغة" value="=SUM(J11:J42)">${wideChevron("#c8c8c8")}</div>
      </div>
      <div class="main" dir="ltr">
        <div class="vbar">${icon(10, 9, svg`<path d="M5 0 10 9H0Z" fill="#999"/>`)}<span class="thumb"></span>${icon(10, 9, svg`<path d="M0 0H10L5 9Z" fill="#999"/>`)}</div>
        <sheet-grid dir="rtl"></sheet-grid>
      </div>
      <div class="sheets">
        <div class="nav">${icon(8, 14, svg`<path d="M1 1 6.500 7 1 13" stroke="#999" stroke-width="1.400"/>`)}${icon(8, 14, svg`<path d="M7 1 1.500 7 7 13" stroke="#999" stroke-width="1.400"/>`)}</div>
        <button class="sheet">واجهة البرنامج</button><button class="sheet">دليل الحسابات</button>
        <button class="sheet on"><span>اليومية الامريكية</span></button>
        <button class="plus" aria-label="ورقة جديدة">${icon(16, 16, svg`<path d="M8 1V15M1 8H15" stroke="#e4e4e4" stroke-width="1.400"/>`)}</button>
        <div class="hwrap"><span class="dots">${dots}</span><div class="hbar"><div>${icon(9, 12, svg`<path d="M0 0 9 6 0 12Z" fill="#999"/>`)}<i></i></div>${icon(9, 11, svg`<path d="M9 0 0 5.500 9 11Z" fill="#999"/>`)}</div></div>
      </div>
      <footer class="status">
        <span>جاهز</span><span>مراجع دائرية: J12</span>
        <span class="acc">${icon(18, 18, svg`<circle cx="8" cy="3" r="2" stroke="#fff" stroke-width="1.300"/><path d="M2 4.500C5 7.500 11 7.500 14 4.500M6 7V11L3.500 16.500M10 7V10M8.500 11 5.500 16.500M9.500 10 16.500 17M16.500 10 9.500 17" stroke="#fff" stroke-width="1.400"/>`)}إمكانية الوصول لذوي الاحتياجات الخاصة: اطلع على توصيات</span>
        <div class="views">
          <button class="view on" aria-label="عادي">${icon(18, 17, svg`<path d="M1 1H17V16H1ZM1 6H17M1 11H17M6.500 1V16M11.500 1V16" stroke="#e4e4e4" stroke-width="1.700"/>`)}</button>
          <button class="view" aria-label="تخطيط الصفحة">${icon(18, 17, svg`<rect x="1" y="1" width="16" height="15" stroke="#e4e4e4" stroke-width="1.600"/><path d="M5 3.500H13V13.500H5ZM6.500 6H11.500M6.500 8.500H11.500M6.500 11H11.500" stroke="#e4e4e4" stroke-width="1.200"/>`)}</button>
          <button class="view" aria-label="فواصل الصفحات">${icon(18, 17, svg`<rect x="1" y="1" width="16" height="15" stroke="#e4e4e4" stroke-width="1.600"/><path d="M1 10H11V1M6 1V10" stroke="#e4e4e4" stroke-width="1.600"/>`)}</button>
        </div>
        <div class="zoom"><button aria-label="تصغير العرض">${icon(10, 10, svg`<path d="M0 5H10" stroke="#fff" stroke-width="1.200"/>`)}</button>
          <input type="range" min="0" max="100" value="32" aria-label="تكبير/تصغير">
          <button aria-label="تكبير العرض">${icon(10, 10, svg`<path d="M0 5H10M5 0V10" stroke="#fff" stroke-width="1.200"/>`)}</button>
          <output dir="ltr">67%</output></div>
      </footer>
      <div class="mark" aria-hidden="true"><span>خـ</span><span>5</span><span>ـسات</span></div>
    </div>`;
  }
}
